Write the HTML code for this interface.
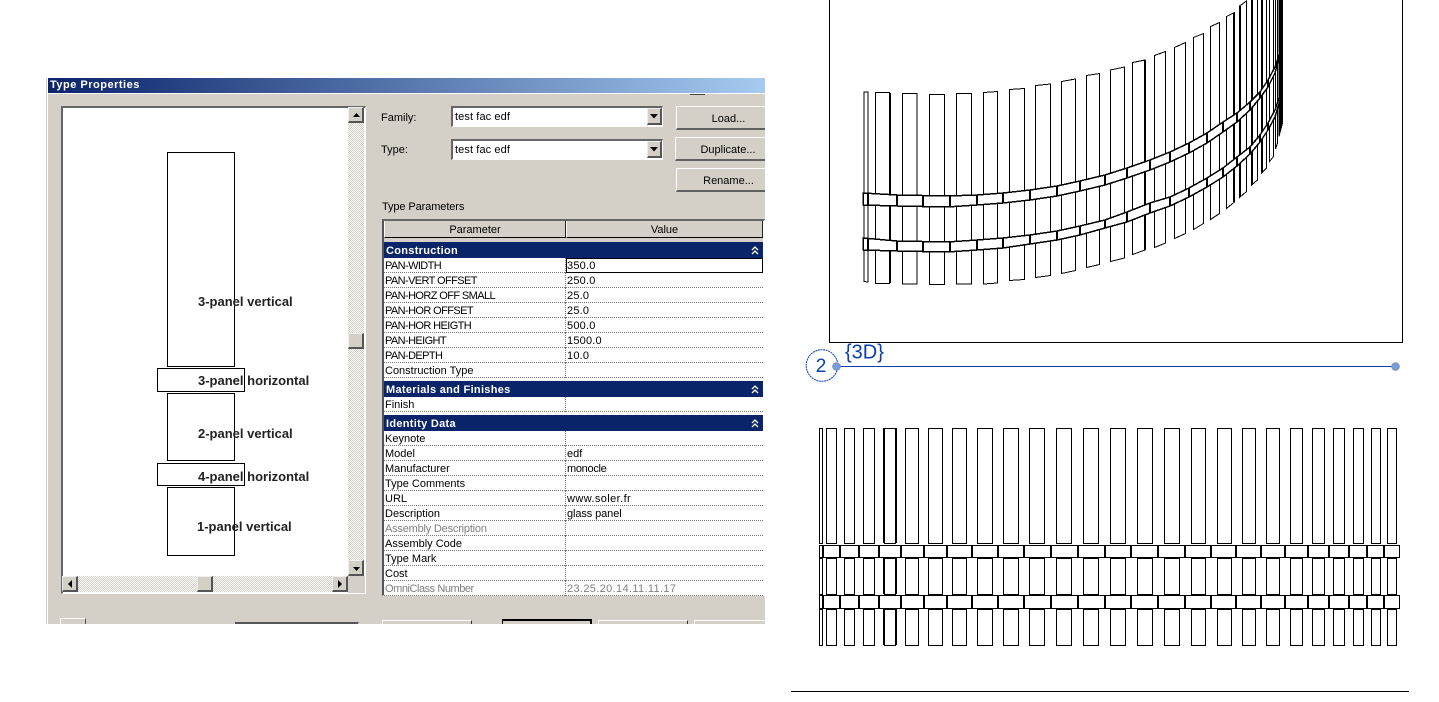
<!DOCTYPE html>
<html><head><meta charset="utf-8">
<style>
html,body{margin:0;padding:0;background:#fff;width:1439px;height:702px;overflow:hidden}
#dlg{position:absolute;left:46px;top:78px;width:719px;height:546px;overflow:hidden;background:#d4d0c8;font:11px "Liberation Sans",sans-serif;color:#000}
.a{position:absolute;box-sizing:border-box}
.t{position:absolute;white-space:nowrap;line-height:14px}
.btn{position:absolute;box-sizing:border-box;background:#d4d0c8;border-top:1px solid #fff;border-left:1px solid #fff;border-right:1px solid #404040;border-bottom:2px solid #606060;text-align:center;line-height:24px;padding-left:10px;white-space:nowrap}
.sb{position:absolute;box-sizing:border-box;background:#d4d0c8;border-top:1px solid #eee;border-left:1px solid #eee;border-right:2px solid #555;border-bottom:2px solid #555}
.trk{position:absolute;background:repeating-conic-gradient(#d4d0c8 0 25%,#fff 0 50%) 0 0/2px 2px}
.combo{position:absolute;box-sizing:border-box;background:#fff;border-top:2px solid #666;border-left:2px solid #666;border-right:1px solid #fff;border-bottom:1px solid #fff;padding-left:2px;line-height:19px;letter-spacing:.1px}
.band{position:absolute;left:338px;width:379px;background:#0a246a;color:#fff;font-weight:bold;height:16px;line-height:18px;padding-left:2px;box-sizing:border-box;letter-spacing:.3px;overflow:hidden}
.r{position:absolute;left:338px;width:379px;height:15px;box-sizing:border-box;background:#fff;border-bottom:1px dotted #777;line-height:16px;white-space:nowrap}
.r b{font-weight:normal;position:absolute;left:1px;top:0}
.r i{font-style:normal;position:absolute;left:181px;top:0;height:15px;padding-left:1px;border-left:1px dotted #777}
.g{color:#808080}
.c{letter-spacing:-.6px}
.n{letter-spacing:.2px}
.p{position:absolute;box-sizing:border-box;border:1px solid #000}
.l{position:absolute;white-space:nowrap;font:bold 13px/16px "Liberation Sans",sans-serif;color:#222}
</style></head>
<body>
<div id="dlg">
  <div class="a" style="left:1px;top:0;width:1px;height:546px;background:#fff"></div>
  <div class="a" style="left:2px;top:0;width:717px;height:15px;background:linear-gradient(90deg,#0a246a,#a6caf0)"></div>
  <div class="a" style="left:2px;top:15px;width:717px;height:1px;background:#fff"></div>
  <div class="t" style="left:4px;top:0;color:#fff;font-weight:bold;line-height:14px;letter-spacing:.5px">Type Properties</div>
  <div class="a" style="left:644px;top:16px;width:15px;height:1px;background:#444"></div>

  <!-- preview -->
  <div class="a" style="left:15px;top:28px;width:305px;height:488px;background:#fff;border-top:2px solid #666;border-left:2px solid #666;border-right:1px solid #fff;border-bottom:1px solid #fff"></div>
  <div class="p" style="left:121px;top:74px;width:68px;height:215px"></div>
  <div class="p" style="left:111px;top:290px;width:88px;height:24px"></div>
  <div class="p" style="left:121px;top:315px;width:68px;height:68px"></div>
  <div class="p" style="left:111px;top:385px;width:88px;height:23px"></div>
  <div class="p" style="left:121px;top:409px;width:68px;height:69px"></div>
  <div class="l" style="left:152px;top:216px">3-panel vertical</div>
  <div class="l" style="left:152px;top:295px">3-panel horizontal</div>
  <div class="l" style="left:152px;top:348px">2-panel vertical</div>
  <div class="l" style="left:152px;top:391px">4-panel horizontal</div>
  <div class="l" style="left:151px;top:441px">1-panel vertical</div>

  <div class="trk" style="left:302px;top:29px;width:16px;height:453px"></div>
  <div class="sb" style="left:302px;top:29px;width:16px;height:16px"></div>
  <div class="sb" style="left:302px;top:255px;width:16px;height:16px"></div>
  <div class="sb" style="left:302px;top:482px;width:16px;height:16px"></div>
  <div class="trk" style="left:16px;top:498px;width:286px;height:16px"></div>
  <div class="sb" style="left:16px;top:498px;width:16px;height:16px"></div>
  <div class="sb" style="left:151px;top:498px;width:16px;height:16px"></div>
  <div class="sb" style="left:286px;top:498px;width:16px;height:16px"></div>
  <div class="a" style="left:302px;top:498px;width:17px;height:17px;background:#d4d0c8"></div>
  <svg class="a" style="left:0;top:0" width="719" height="546"><path d="M307 39h7l-3.500-4zM307 489h7l-3.500 4zM26 502v8l-4-4zM292 502v8l4-4z" fill="#000"/></svg>

  <!-- form -->
  <div class="t" style="left:335px;top:33px">Family:</div>
  <div class="combo" style="left:405px;top:28px;width:212px;height:21px">test fac edf</div>
  <div class="sb" style="left:601px;top:30px;width:15px;height:17px;z-index:1"></div>
  <div class="t" style="left:335px;top:65px">Type:</div>
  <div class="combo" style="left:405px;top:61px;width:212px;height:21px">test fac edf</div>
  <div class="sb" style="left:601px;top:63px;width:15px;height:17px;z-index:1"></div>
  <svg class="a" style="left:0;top:0;z-index:2" width="719" height="100"><path d="M604 36h8l-4 4.500zM604 69h8l-4 4.500z" fill="#000"/></svg>
  <div class="btn" style="left:630px;top:28px;width:95px;height:24px">Load...</div>
  <div class="btn" style="left:629px;top:59px;width:96px;height:24px">Duplicate...</div>
  <div class="btn" style="left:630px;top:90px;width:95px;height:24px">Rename...</div>
  <div class="t" style="left:336px;top:122px;letter-spacing:-.1px">Type Parameters</div>

  <!-- table -->
  <div class="a" style="left:336px;top:141px;width:383px;height:377px;background:#fff;border-top:2px solid #666;border-left:2px solid #555;border-bottom:1px solid #fff;border-right:1px solid #fff"></div>
  <div class="a" style="left:338px;top:143px;width:182px;height:17px;background:#d4d0c8;border-right:1px solid #222;border-bottom:1px solid #000;text-align:center;line-height:19px;border-left:1px solid #fff">Parameter</div>
  <div class="a" style="left:520px;top:143px;width:197px;height:17px;background:#d4d0c8;border-right:1px solid #222;border-bottom:1px solid #000;text-align:center;line-height:19px;border-left:1px solid #fff">Value</div>
  <div class="a" style="left:338px;top:160px;width:379px;height:4px;background:#d4d0c8"></div>
  <div class="band" style="top:164px">Construction</div>
  <div class="r" style="top:180px"><b class="c">PAN-WIDTH</b><i class="n">350.0</i></div>
  <div class="a" style="left:520px;top:180px;width:197px;height:15px;border:1px solid #000;z-index:1"></div>
  <div class="r" style="top:195px"><b class="c">PAN-VERT OFFSET</b><i class="n">250.0</i></div>
  <div class="r" style="top:210px"><b class="c">PAN-HORZ OFF SMALL</b><i class="n">25.0</i></div>
  <div class="r" style="top:225px"><b class="c">PAN-HOR OFFSET</b><i class="n">25.0</i></div>
  <div class="r" style="top:240px"><b class="c">PAN-HOR HEIGTH</b><i class="n">500.0</i></div>
  <div class="r" style="top:255px"><b class="c">PAN-HEIGHT</b><i class="n">1500.0</i></div>
  <div class="r" style="top:270px"><b class="c">PAN-DEPTH</b><i class="n">10.0</i></div>
  <div class="r" style="top:285px"><b>Construction Type</b><i></i></div>
  <div class="band" style="top:303px">Materials and Finishes</div>
  <div class="r" style="top:319px"><b>Finish</b><i></i></div>
  <div class="band" style="top:337px">Identity Data</div>
  <div class="r" style="top:353px"><b>Keynote</b><i></i></div>
  <div class="r" style="top:368px"><b>Model</b><i>edf</i></div>
  <div class="r" style="top:383px"><b>Manufacturer</b><i style="letter-spacing:-.3px">monocle</i></div>
  <div class="r" style="top:398px"><b>Type Comments</b><i></i></div>
  <div class="r" style="top:413px"><b>URL</b><i style="letter-spacing:.4px">www.soler.fr</i></div>
  <div class="r" style="top:428px"><b>Description</b><i style="letter-spacing:-.1px">glass panel</i></div>
  <div class="r" style="top:443px"><b class="g" style="letter-spacing:-.2px">Assembly Description</b><i></i></div>
  <div class="r" style="top:458px"><b>Assembly Code</b><i></i></div>
  <div class="r" style="top:473px"><b>Type Mark</b><i></i></div>
  <div class="r" style="top:488px"><b>Cost</b><i></i></div>
  <div class="r" style="top:503px"><b class="g" style="letter-spacing:-.45px">OmniClass Number</b><i class="g" style="letter-spacing:.35px">23.25.20.14.11.11.17</i></div>
  <svg class="a" style="left:0;top:0;z-index:3" width="719" height="400"><path d="M706 172l3-3 3 3M706 176l3-3 3 3M706 311l3-3 3 3M706 315l3-3 3 3M706 345l3-3 3 3M706 349l3-3 3 3" fill="none" stroke="#fff" stroke-width="1.300"/></svg>

  <!-- bottom -->
  <div class="a" style="left:14px;top:540px;width:26px;height:10px;border-top:1px solid #fff;border-left:1px solid #fff;border-right:1px solid #555"></div>
  <div class="a" style="left:189px;top:544px;width:124px;height:4px;border-top:2px solid #555;border-right:1px solid #fff"></div>
  <div class="a" style="left:336px;top:542px;width:90px;height:6px;border-top:1px solid #fff;border-left:1px solid #fff;border-right:1px solid #333"></div>
  <div class="a" style="left:456px;top:541px;width:90px;height:6px;border-top:2px solid #000;border-left:1px solid #000;border-right:2px solid #000"></div>
  <div class="a" style="left:552px;top:542px;width:90px;height:6px;border-top:1px solid #fff;border-left:1px solid #fff;border-right:1px solid #333"></div>
  <div class="a" style="left:648px;top:542px;width:71px;height:6px;border-top:1px solid #fff;border-left:1px solid #fff"></div>
</div>

<svg style="position:absolute;left:0;top:0" width="1439" height="702" viewBox="0 0 1439 702" pointer-events="none">
  <g fill="none" stroke="#000" stroke-width="1" shape-rendering="crispEdges">
    <path d="M829.500 0V342.500H1402.500V0"/>
    <path d="M791 691.500H1409"/>
    <!-- 3D panels -->
    <path d="M864 92H868V282L864 281.500Z"/>
    <path d="M875.500 92.500H889.500V283.500H875.500Z"/>
    <path d="M902.500 93.500H917V284H902.500Z"/>
    <path d="M929.500 94.500H944.500V284.500H929.500Z"/>
    <path d="M956.500 93.500H971.500V284H956.500Z"/>
    <path d="M983.500 92.500L997.500 91.500V283L983.500 284Z"/>
    <path d="M1009.500 89.500L1024.500 88.500V279.500L1009.500 280.500Z"/>
    <path d="M1035.500 85.500L1050.500 84V275.500L1035.500 277.500Z"/>
    <path d="M1061.500 81.500L1075.500 79V270.500L1061.500 273.500Z"/>
    <path d="M1086.500 75.500L1099.500 73.500V264.500L1086.500 267.500Z"/>
    <path d="M1110.500 70L1124.500 67V258L1110.500 261.500Z"/>
    <path d="M1132.500 62.500L1145 60V250L1132.500 254.500Z"/>
    <path d="M1154.500 55.500L1165.500 51.500V243L1154.500 247.500Z"/>
    <path d="M1174.500 47.500L1185.500 42.500V233.500L1174.500 238.500Z"/>
    <path d="M1193.500 37.500L1203.500 33.500V223.500L1193.500 229.500Z"/>
    <path d="M1210.500 26.500L1219.500 22.500V213.500L1210.500 219.500Z"/>
    <path d="M1226.500 16.500L1234.500 12.500V202L1226.500 208.500Z"/>
    <path d="M1239.500 6L1246.500 1V191.500L1239.500 197.500Z"/>
    <path d="M1251.500 0V185L1257.500 180V0"/>
    <path d="M1261.500 0V173L1266.500 168V0"/>
    <path d="M1269.500 0V161.500L1273.500 156.500V0"/>
    <path d="M1275.500 0V149L1277.500 143V0"/>
    <path d="M1279 0V136.500L1282.500 123V0H1279Z" fill="#000"/>
    <path d="M890 93V283M1145 60V250M1234 13V202M1240 6V197M1252 0V185M1262 0V173" stroke-width="2"/>
    <!-- bands -->
    <path fill="#fff" stroke-width="1.500" d="M863 193L897 195 947 196 977 195 1003 193 1030 190 1057 186 1080 181 1105 175 1127 168 1150 160 1170 152 1189 143 1207 133 1223 122 1237 113 1250 102 1260 92 1268 80 1275 67 1279 55 1279 58 1275 73 1268 87 1260 98 1250 110 1237 122 1223 132 1207 143 1189 153 1170 162 1150 170 1127 178 1105 185 1080 191 1057 196 1030 200 1003 203 977 205 947 207 897 206 863 205Z"/>
    <path fill="#fff" stroke-width="1.500" d="M863 238L897 241 947 242 977 240 1003 238 1030 235 1057 231 1080 226 1105 220 1127 212 1150 203 1170 197 1189 188 1207 178 1223 168 1237 157 1250 147 1260 135 1268 123 1275 110 1280 95 1280 100 1275 117 1268 130 1260 142 1250 154 1237 166 1223 177 1207 187 1189 197 1170 206 1150 213 1127 222 1105 228 1080 235 1057 240 1030 244 1003 248 977 250 947 252 897 251 863 250Z"/>
    <path stroke-width="2" d="M868 193V206M897 195V206M923 196V207M950 196V207M977 195V205M1003 193V203M1030 190V200M1057 186V196M1080 181V191M1105 175V185M1127 168V178M1150 160V170M1170 152V162M1189 143V153M1207 133V143M1223 122V132M1237 113V122M1250 102V110M1260 92V98M1268 80V87"/>
    <path stroke-width="2" d="M868 238V250M897 241V251M923 242V252M950 242V252M977 240V250M1003 238V248M1030 235V244M1057 231V240M1080 226V235M1105 220V228M1127 212V222M1150 203V213M1170 197V206M1189 188V197M1207 178V187M1223 168V177M1237 157V166M1250 147V154M1260 135V142M1268 123V130"/>

    <!-- elevation panels -->
    <path d="M819.500 428.500H822.500V543.500H819.500ZM826.500 428.500H836.500V543.500H826.500ZM844.500 428.500H854.500V543.500H844.500ZM863.500 428.500H874.500V543.500H863.500ZM884.500 428.500H895.500V543.500H884.500ZM905.500 428.500H918.500V543.500H905.500ZM928.500 428.500H942.500V543.500H928.500ZM952.500 428.500H966.500V543.500H952.500ZM977.500 428.500H992.500V543.500H977.500ZM1003.500 428.500H1018.500V543.500H1003.500ZM1029.500 428.500H1044.500V543.500H1029.500ZM1056.500 428.500H1071.500V543.500H1056.500ZM1083.500 428.500H1098.500V543.500H1083.500ZM1110.500 428.500H1125.500V543.500H1110.500ZM1137.500 428.500H1152.500V543.500H1137.500ZM1164.500 428.500H1179.500V543.500H1164.500ZM1191.500 428.500H1205.500V543.500H1191.500ZM1217.500 428.500H1231.500V543.500H1217.500ZM1242.500 428.500H1255.500V543.500H1242.500ZM1266.500 428.500H1279.500V543.500H1266.500ZM1290.500 428.500H1302.500V543.500H1290.500ZM1312.500 428.500H1324.500V543.500H1312.500ZM1333.500 428.500H1344.500V543.500H1333.500ZM1353.500 428.500H1363.500V543.500H1353.500ZM1371.500 428.500H1380.500V543.500H1371.500ZM1387.500 428.500H1396.500V543.500H1387.500Z"/>
    <path d="M819.500 558.500H822.500V594.500H819.500ZM826.500 558.500H836.500V594.500H826.500ZM844.500 558.500H854.500V594.500H844.500ZM863.500 558.500H874.500V594.500H863.500ZM884.500 558.500H895.500V594.500H884.500ZM905.500 558.500H918.500V594.500H905.500ZM928.500 558.500H942.500V594.500H928.500ZM952.500 558.500H966.500V594.500H952.500ZM977.500 558.500H992.500V594.500H977.500ZM1003.500 558.500H1018.500V594.500H1003.500ZM1029.500 558.500H1044.500V594.500H1029.500ZM1056.500 558.500H1071.500V594.500H1056.500ZM1083.500 558.500H1098.500V594.500H1083.500ZM1110.500 558.500H1125.500V594.500H1110.500ZM1137.500 558.500H1152.500V594.500H1137.500ZM1164.500 558.500H1179.500V594.500H1164.500ZM1191.500 558.500H1205.500V594.500H1191.500ZM1217.500 558.500H1231.500V594.500H1217.500ZM1242.500 558.500H1255.500V594.500H1242.500ZM1266.500 558.500H1279.500V594.500H1266.500ZM1290.500 558.500H1302.500V594.500H1290.500ZM1312.500 558.500H1324.500V594.500H1312.500ZM1333.500 558.500H1344.500V594.500H1333.500ZM1353.500 558.500H1363.500V594.500H1353.500ZM1371.500 558.500H1380.500V594.500H1371.500ZM1387.500 558.500H1396.500V594.500H1387.500Z"/>
    <path d="M819.500 609.500H822.500V645.500H819.500ZM826.500 609.500H836.500V645.500H826.500ZM844.500 609.500H854.500V645.500H844.500ZM863.500 609.500H874.500V645.500H863.500ZM884.500 609.500H895.500V645.500H884.500ZM905.500 609.500H918.500V645.500H905.500ZM928.500 609.500H942.500V645.500H928.500ZM952.500 609.500H966.500V645.500H952.500ZM977.500 609.500H992.500V645.500H977.500ZM1003.500 609.500H1018.500V645.500H1003.500ZM1029.500 609.500H1044.500V645.500H1029.500ZM1056.500 609.500H1071.500V645.500H1056.500ZM1083.500 609.500H1098.500V645.500H1083.500ZM1110.500 609.500H1125.500V645.500H1110.500ZM1137.500 609.500H1152.500V645.500H1137.500ZM1164.500 609.500H1179.500V645.500H1164.500ZM1191.500 609.500H1205.500V645.500H1191.500ZM1217.500 609.500H1231.500V645.500H1217.500ZM1242.500 609.500H1255.500V645.500H1242.500ZM1266.500 609.500H1279.500V645.500H1266.500ZM1290.500 609.500H1302.500V645.500H1290.500ZM1312.500 609.500H1324.500V645.500H1312.500ZM1333.500 609.500H1344.500V645.500H1333.500ZM1353.500 609.500H1363.500V645.500H1353.500ZM1371.500 609.500H1380.500V645.500H1371.500ZM1387.500 609.500H1396.500V645.500H1387.500Z"/>
    <path d="M884 428V543M896 428V543M884 558V594M896 558V594M884 609V645M896 609V645" stroke-width="2"/>
    <!-- elevation bands -->
    <path d="M819.500 545.500H1399.500V557.500H819.500Z"/>
    <path d="M819.500 595.500H1399.500V608.500H819.500Z"/>
    <path stroke-width="2" d="M823 545V558M840 545V558M859 545V558M879 545V558M901 545V558M924 545V558M947 545V558M972 545V558M998 545V558M1024 545V558M1051 545V558M1078 545V558M1105 545V558M1131 545V558M1158 545V558M1185 545V558M1211 545V558M1236 545V558M1261 545V558M1285 545V558M1308 545V558M1329 545V558M1349 545V558M1367 545V558M1384 545V558"/>
    <path stroke-width="2" d="M823 595V609M840 595V609M859 595V609M879 595V609M901 595V609M924 595V609M947 595V609M972 595V609M998 595V609M1024 595V609M1051 595V609M1078 595V609M1105 595V609M1131 595V609M1158 595V609M1185 595V609M1211 595V609M1236 595V609M1261 595V609M1285 595V609M1308 595V609M1329 595V609M1349 595V609M1367 595V609M1384 595V609"/>
  </g>
  <!-- view title -->
  <circle cx="822" cy="365.500" r="15.800" fill="#fff" stroke="#0a3fb0" stroke-width="1" stroke-dasharray="2 .6"/>
  <line x1="837" y1="366.500" x2="1395" y2="366.500" stroke="#0a3fa8" stroke-width="1"/>
  <circle cx="836.500" cy="366.500" r="3.800" fill="#6f9fe2" stroke="#8a8f9a" stroke-width="1"/>
  <circle cx="1395.500" cy="366.500" r="3.800" fill="#6f9fe2" stroke="#8a8f9a" stroke-width="1"/>
  <text x="821" y="372" text-anchor="middle" font-family="Liberation Sans, sans-serif" font-size="19" fill="#0a3fb0">2</text>
  <text x="845" y="358.500" font-family="Liberation Sans, sans-serif" font-size="20" fill="#0a3fb0">{3D}</text>
</svg>
</body></html>
